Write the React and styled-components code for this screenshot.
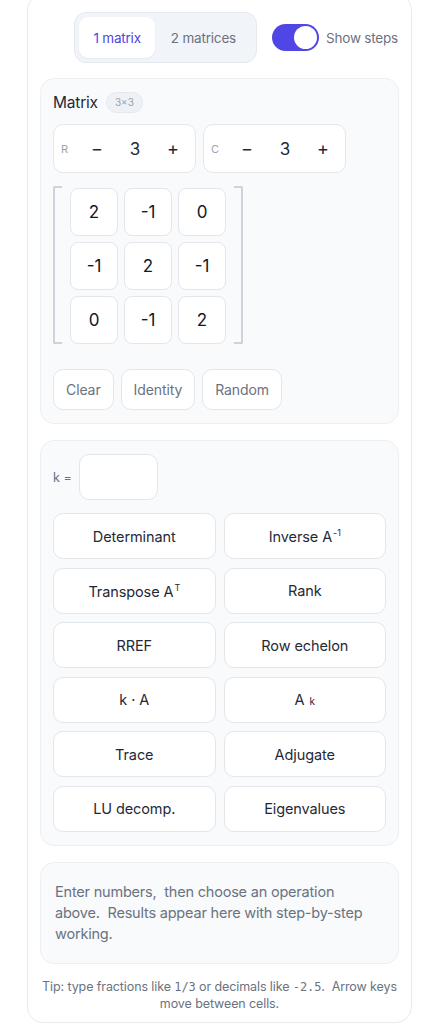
import React, { useState } from "react";
import styled, { createGlobalStyle } from "styled-components";

const GlobalStyle = createGlobalStyle`
  * { box-sizing: border-box; }
  body {
    margin: 0;
    background: #ffffff;
    font-family: "Inter", "Noto Sans", sans-serif;
    color: #1f2937;
  }
`;

const initial = [
  ["2", "-1", "0"],
  ["-1", "2", "-1"],
  ["0", "-1", "2"],
];

const ops = [
  ["Determinant", null],
  ["Inverse A", "-1"],
  ["Transpose A", "T"],
  ["Rank", null],
  ["RREF", null],
  ["Row echelon", null],
  ["k · A", null],
  ["A", "k", true],
  ["Trace", null],
  ["Adjugate", null],
  ["LU decomp.", null],
  ["Eigenvalues", null],
];

const App = () => {
  const [mode, setMode] = useState(1);
  const [steps, setSteps] = useState(true);
  const [cells, setCells] = useState(initial);

  const onCellChange = (r, c) => (e) => {
    const next = cells.map((row) => [...row]);
    next[r][c] = e.target.value;
    setCells(next);
  };

  return (
    <St.Page>
      <GlobalStyle />
      <St.Card>
        <St.TopBar>
          <St.Tabs>
            <St.Tab $active={mode === 1} onClick={() => setMode(1)}>
              1 matrix
            </St.Tab>
            <St.Tab $active={mode === 2} onClick={() => setMode(2)}>
              2 matrices
            </St.Tab>
          </St.Tabs>
          <St.ToggleLabel onClick={() => setSteps(!steps)}>
            <St.Toggle $on={steps}>
              <St.Knob $on={steps} />
            </St.Toggle>
            Show steps
          </St.ToggleLabel>
        </St.TopBar>

        <St.Panel>
          <St.TitleRow>
            <St.Title>Matrix</St.Title>
            <St.Badge>3×3</St.Badge>
          </St.TitleRow>
          <St.StepperRow>
            <St.Stepper>
              <St.StepLabel>R</St.StepLabel>
              <St.StepBtn>−</St.StepBtn>
              <St.StepValue>3</St.StepValue>
              <St.StepBtn>+</St.StepBtn>
            </St.Stepper>
            <St.Stepper>
              <St.StepLabel>C</St.StepLabel>
              <St.StepBtn>−</St.StepBtn>
              <St.StepValue>3</St.StepValue>
              <St.StepBtn>+</St.StepBtn>
            </St.Stepper>
          </St.StepperRow>
          <St.MatrixWrap>
            <St.Bracket $side="left" />
            <St.Grid>
              {cells.map((row, r) =>
                row.map((v, c) => (
                  <St.Cell key={`${r}-${c}`} value={v} onChange={onCellChange(r, c)} />
                ))
              )}
            </St.Grid>
            <St.Bracket $side="right" />
          </St.MatrixWrap>
          <St.ActionRow>
            <St.SmallBtn>Clear</St.SmallBtn>
            <St.SmallBtn>Identity</St.SmallBtn>
            <St.SmallBtn>Random</St.SmallBtn>
          </St.ActionRow>
        </St.Panel>

        <St.Panel>
          <St.KRow>
            <St.KLabel>k =</St.KLabel>
            <St.KInput />
          </St.KRow>
          <St.OpGrid>
            {ops.map(([label, sup, inline]) => (
              <St.OpBtn key={label}>
                {label}
                {sup && (inline ? <St.InlineSup>{sup}</St.InlineSup> : <St.Sup>{sup}</St.Sup>)}
              </St.OpBtn>
            ))}
          </St.OpGrid>
        </St.Panel>

        <St.Result>
          Enter numbers,&nbsp; then choose an operation above.&nbsp; Results appear
          here with step-by-step working.
        </St.Result>

        <St.Tip>
          Tip: type fractions like <St.Mono>1/3</St.Mono> or decimals like{" "}
          <St.Mono>-2.5</St.Mono>.&nbsp; Arrow keys move between cells.
        </St.Tip>
      </St.Card>
    </St.Page>
  );
};

export default App;

const St = {
  Page: styled.div`
    display: flex;
    justify-content: center;
    padding: 0 27px;
  `,
  Card: styled.div`
    width: 386px;
    margin-top: -6px;
    padding: 17px 12px 10px;
    border: 1px solid #e8eaee;
    border-radius: 16px;
    background: #ffffff;
    display: flex;
    flex-direction: column;
    gap: 16px;
  `,
  TopBar: styled.div`
    display: flex;
    align-items: center;
    justify-content: flex-end;
    gap: 15px;
    padding-right: 1px;
    margin-bottom: -1px;
  `,
  Tabs: styled.div`
    display: flex;
    padding: 4px;
    height: 51px;
    border: 1px solid #e5e8ed;
    border-radius: 12px;
    background: #f1f4f8;
  `,
  Tab: styled.button`
    border: none;
    height: 41px;
    padding: 0 ${({ $active }) => ($active ? "14px" : "16px")};
    border-radius: 9px;
    font-family: inherit;
    font-size: 13.5px;
    letter-spacing: -0.2px;
    cursor: pointer;
    color: ${({ $active }) => ($active ? "#4f46e5" : "#6b7280")};
    background: ${({ $active }) => ($active ? "#ffffff" : "transparent")};
    box-shadow: ${({ $active }) => ($active ? "0 1px 2px rgba(0,0,0,0.05)" : "none")};
  `,
  ToggleLabel: styled.label`
    display: flex;
    align-items: center;
    gap: 7px;
    font-size: 13.5px;
    letter-spacing: -0.2px;
    color: #6b7280;
    cursor: pointer;
  `,
  Toggle: styled.span`
    position: relative;
    width: 47px;
    height: 27px;
    border-radius: 14px;
    background: ${({ $on }) => ($on ? "#4f46e5" : "#d1d5db")};
  `,
  Knob: styled.span`
    position: absolute;
    top: 2px;
    left: ${({ $on }) => ($on ? "22px" : "2px")};
    width: 23px;
    height: 23px;
    border-radius: 50%;
    background: #ffffff;
  `,
  Panel: styled.div`
    padding: 12px 12px 13px;
    background: #f8fafc;
    border: 1px solid #eceff3;
    border-radius: 14px;
    display: flex;
    flex-direction: column;
  `,
  TitleRow: styled.div`
    display: flex;
    align-items: center;
    gap: 8px;
    height: 22px;
    margin-bottom: 11px;
  `,
  Title: styled.div`
    font-size: 15.5px;
    letter-spacing: -0.2px;
    color: #1f2937;
  `,
  Badge: styled.span`
    display: flex;
    align-items: center;
    height: 21px;
    padding: 0 8px;
    border-radius: 11px;
    background: #eef1f5;
    border: 1px solid #e5e8ee;
    font-size: 10px;
    color: #9ca3af;
  `,
  StepperRow: styled.div`
    display: flex;
    gap: 7px;
  `,
  Stepper: styled.div`
    display: flex;
    align-items: center;
    width: 143px;
    height: 49px;
    padding: 0 8px 0 7px;
    background: #ffffff;
    border: 1px solid #e5e7eb;
    border-radius: 10px;
  `,
  StepLabel: styled.span`
    font-size: 11px;
    color: #9ca3af;
    width: 22px;
  `,
  StepBtn: styled.span`
    width: 28px;
    text-align: center;
    font-size: 18px;
    color: #1f2937;
  `,
  StepValue: styled.span`
    flex: 1;
    text-align: center;
    font-size: 17px;
    color: #1f2937;
  `,
  MatrixWrap: styled.div`
    display: flex;
    align-items: stretch;
    gap: 8px;
    margin-top: 13px;
    margin-bottom: 25px;
  `,
  Bracket: styled.div`
    width: 9px;
    border: 2px solid #cdd3dc;
    border-${({ $side }) => ($side === "left" ? "right" : "left")}: none;
    border-radius: ${({ $side }) => ($side === "left" ? "2px 0 0 2px" : "0 2px 2px 0")};
  `,
  Grid: styled.div`
    display: grid;
    grid-template-columns: repeat(3, 48px);
    gap: 6px;
    padding: 2px 0 0;
  `,
  Cell: styled.input`
    width: 48px;
    height: 48px;
    border: 1px solid #e3e6eb;
    border-radius: 8px;
    background: #ffffff;
    text-align: center;
    font-family: inherit;
    font-size: 17px;
    color: #111827;
    outline: none;
  `,
  ActionRow: styled.div`
    display: flex;
    gap: 7px;
  `,
  SmallBtn: styled.button`
    height: 41px;
    padding: 0 12px;
    background: #ffffff;
    border: 1px solid #e3e6eb;
    border-radius: 10px;
    font-family: inherit;
    font-size: 14px;
    letter-spacing: -0.1px;
    color: #6b7280;
    cursor: pointer;
  `,
  KRow: styled.div`
    display: flex;
    align-items: center;
    gap: 7px;
    margin-top: 1px;
    margin-bottom: 13px;
  `,
  KLabel: styled.span`
    font-size: 12.5px;
    color: #6b7280;
  `,
  KInput: styled.input`
    width: 79px;
    height: 46px;
    border: 1px solid #e3e6eb;
    border-radius: 10px;
    background: #ffffff;
    outline: none;
  `,
  OpGrid: styled.div`
    display: grid;
    grid-template-columns: 1fr 1fr;
    gap: 8.5px 8px;
  `,
  OpBtn: styled.button`
    height: 46px;
    background: #ffffff;
    border: 1px solid #e3e6eb;
    border-radius: 10px;
    font-family: inherit;
    font-size: 14.5px;
    letter-spacing: -0.1px;
    color: #1f2937;
    cursor: pointer;
  `,
  Sup: styled.sup`
    font-size: 9px;
    margin-left: 1px;
  `,
  InlineSup: styled.span`
    font-size: 10px;
    margin-left: 5px;
  `,
  Result: styled.div`
    padding: 18px 22px 19px 14px;
    background: #f8fafc;
    border: 1px solid #eceff3;
    border-radius: 14px;
    font-size: 14.5px;
    letter-spacing: -0.2px;
    line-height: 21px;
    color: #6b7280;
  `,
  Tip: styled.div`
    text-align: center;
    font-size: 12.5px;
    letter-spacing: -0.1px;
    line-height: 17px;
    color: #6b7280;
    margin-top: -2px;
  `,
  Mono: styled.span`
    font-family: "DejaVu Sans Mono", monospace;
    font-size: 12px;
    line-height: 1;
  `,
};
